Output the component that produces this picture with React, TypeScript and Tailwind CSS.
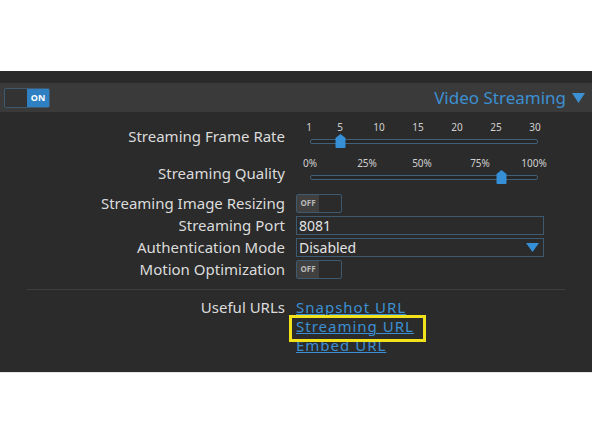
const font = { fontFamily: '"Noto Sans", "Open Sans", sans-serif' };

function Thumb({ left }: { left: number }) {
  return (
    <svg
      className="absolute"
      style={{ left: left - 5, top: 0 }}
      width="11"
      height="14"
      viewBox="0 0 11 14"
    >
      <path d="M5.5 0 L10.5 4 L10.5 13 Q10.5 14 9.5 14 L1.5 14 Q0.5 14 0.5 13 L0.5 4 Z" fill="#3590d8" />
    </svg>
  );
}

function Slider({ labels, thumb }: { labels: { t: string; x: number }[]; thumb: number }) {
  return (
    <div className="relative h-[32px] w-[250px]">
      {labels.map((l) => (
        <span
          key={l.t}
          className="absolute top-0 -translate-x-1/2 text-[10px] leading-[12px] text-[#d0d0d0]"
          style={{ left: l.x }}
        >
          {l.t}
        </span>
      ))}
      <div className="absolute left-[14px] top-[18px] h-[5px] w-[228px] rounded-[2px] border border-[#41607a] bg-[#262626]" />
      <div className="absolute left-0 top-[13px] h-[14px] w-[11px]">
        <div className="relative">
          <Thumb left={thumb} />
        </div>
      </div>
    </div>
  );
}

function OffToggle() {
  return (
    <div className="flex h-[19px] w-[46px] rounded-[2px] border border-[#3e5a70] bg-[#2b2b2b]">
      <div className="flex w-[22px] items-center justify-center bg-[#404040] text-[8px] font-bold text-[#b8b8b8]">
        OFF
      </div>
    </div>
  );
}

function Row({ label, children }: { label: string; children: React.ReactNode }) {
  return (
    <div className="flex h-[22px] items-center">
      <div className="w-[288px] pr-[3px] text-right text-[15px] leading-[20px] text-[#dcdcdc]">{label}</div>
      <div className="pl-[8px]">{children}</div>
    </div>
  );
}

export default function App() {
  return (
    <div className="flex h-[444px] w-[592px] flex-col bg-white" style={font}>
      <div className="h-[71px] shrink-0 bg-white" />
      <div className="flex h-[301px] shrink-0 flex-col bg-[#2b2b2b]">
        <div className="h-[12px] bg-[#2a2a2a]" />
        {/* Header */}
        <div className="flex h-[29px] items-center justify-between bg-[#3a3a3a] pl-[4px] pr-[7px]">
          <div className="flex h-[20px] w-[46px] overflow-hidden rounded-[2px] border border-[#3e5a70]">
            <div className="w-[22px] bg-[#333333]" />
            <div className="flex flex-1 items-center justify-center bg-[#2f80c2] text-[9px] font-bold text-white">ON</div>
          </div>
          <div className="flex items-center gap-[6px] text-[17px] text-[#3c8fd2]">
            <span>Video Streaming</span>
            <svg width="13" height="10" viewBox="0 0 13 10">
              <path d="M0 0 L13 0 L6.5 10 Z" fill="#3c8fd2" />
            </svg>
          </div>
        </div>

        {/* Sliders */}
        <div className="mt-[9px] flex items-start">
          <div className="w-[288px] pr-[3px] pt-[5px] text-right text-[15px] leading-[20px] text-[#dcdcdc]">Streaming Frame Rate</div>
          <div className="pl-[8px]">
            <Slider
              thumb={44}
              labels={[
                { t: "1", x: 13 },
                { t: "5", x: 44 },
                { t: "10", x: 83 },
                { t: "15", x: 122 },
                { t: "20", x: 161 },
                { t: "25", x: 200 },
                { t: "30", x: 239 },
              ]}
            />
          </div>
        </div>
        <div className="mt-[4px] flex items-start">
          <div className="w-[288px] pr-[3px] pt-[6px] text-right text-[15px] leading-[20px] text-[#dcdcdc]">Streaming Quality</div>
          <div className="pl-[8px]">
            <Slider
              thumb={205}
              labels={[
                { t: "0%", x: 14 },
                { t: "25%", x: 71 },
                { t: "50%", x: 126 },
                { t: "75%", x: 184 },
                { t: "100%", x: 238 },
              ]}
            />
          </div>
        </div>

        {/* Settings rows */}
        <div className="mt-[3px] flex flex-col">
          <Row label="Streaming Image Resizing">
            <OffToggle />
          </Row>
          <Row label="Streaming Port">
            <div className="flex h-[19px] w-[248px] items-center border border-[#3e5a70] px-[2px] text-[14px] text-[#e4e4e4]">
              8081
            </div>
          </Row>
          <Row label="Authentication Mode">
            <div className="flex h-[19px] w-[248px] items-center justify-between border border-[#3e5a70] px-[2px] text-[14px] text-[#e4e4e4]">
              <span>Disabled</span>
              <svg width="13" height="9" viewBox="0 0 13 9" className="mr-[2px]">
                <path d="M0 0 L13 0 L6.5 9 Z" fill="#3590d8" />
              </svg>
            </div>
          </Row>
          <Row label="Motion Optimization">
            <OffToggle />
          </Row>
        </div>

        <div className="mx-[27px] mt-[9px] h-px bg-[#3d3d3d]" />

        {/* Useful URLs */}
        <div className="mt-[8px] flex items-start">
          <div className="w-[288px] pr-[3px] text-right text-[15px] leading-[19px] text-[#dcdcdc]">Useful URLs</div>
          <div className="flex flex-col pl-[8px] text-[15px] leading-[19px] tracking-[1px] text-[#3c8fd2]">
            <span className="underline decoration-1 underline-offset-[1px]">Snapshot URL</span>
            <span className="relative">
              <span className="underline decoration-1 underline-offset-[1px]">Streaming URL</span>
              <span className="absolute left-[-7px] top-[-2px] h-[27px] w-[137px] border-[3px] border-[#f2e21c]" />
            </span>
            <span className="underline decoration-1 underline-offset-[1px]">Embed URL</span>
          </div>
        </div>
      </div>
      <div className="h-px bg-[#e6e6e6]" />
    </div>
  );
}
